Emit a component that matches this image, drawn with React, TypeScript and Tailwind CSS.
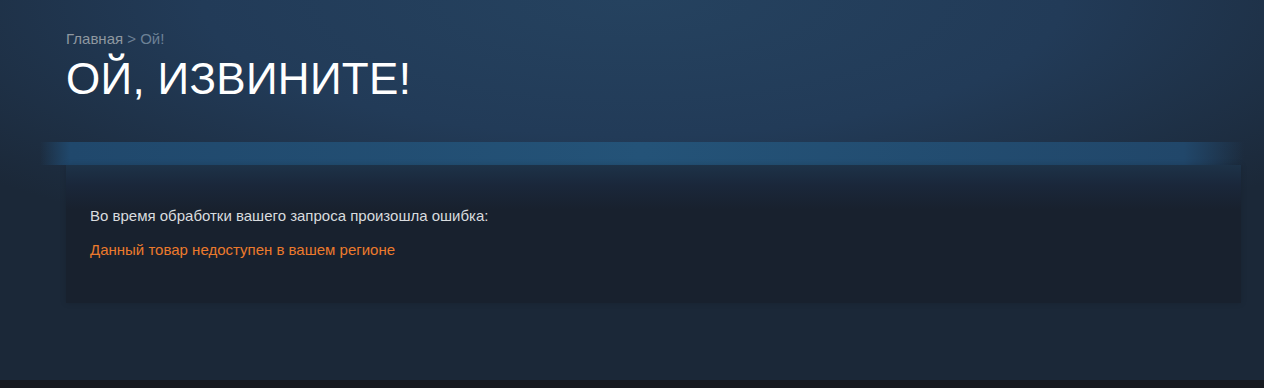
export default function App() {
  return (
    <div className="flex min-h-[388px] flex-col bg-[#1b2838] font-['Liberation_Sans',Arial,sans-serif] [background-image:radial-gradient(ellipse_68%_70%_at_50%_0%,#25425f_0%,#223b58_50%,#1b2838_100%)]">
      <div className="flex-1">
        <div className="px-[66px] pt-[30px]">
          <div className="text-[15px] leading-[17px] text-[#8f98a0]">
            <span>Главная</span>
            <span className="text-[#6d8196]"> &gt; Ой!</span>
          </div>
          <h1 className="mt-[10px] text-[44px] leading-[44px] font-normal tracking-[0.3px] text-white">
            ОЙ, ИЗВИНИТЕ!
          </h1>
        </div>

        <div className="mt-[41px] ml-[40px] mr-[20px] h-[23px] bg-[linear-gradient(90deg,transparent_0%,#20486c_2.5%,#245378_50%,#21476a_95%,transparent_100%)]" />

        <div className="ml-[66px] w-[1175px] bg-[#18212e] [background-image:linear-gradient(180deg,#1d3248_0%,#1a273a_15%,#18212e_32%)] px-6 pt-[42px] pb-[45px] shadow-[0_0_6px_rgba(0,0,0,0.15)]">
          <p className="text-[15px] leading-[17px] text-[#d9dcdf]">
            Во время обработки вашего запроса произошла ошибка:
          </p>
          <p className="mt-[17px] text-[15px] leading-[17px] text-[#ec7a2c]">
            Данный товар недоступен в вашем регионе
          </p>
        </div>
      </div>
      <div className="h-[8px] bg-[#171a21]" />
    </div>
  );
}
